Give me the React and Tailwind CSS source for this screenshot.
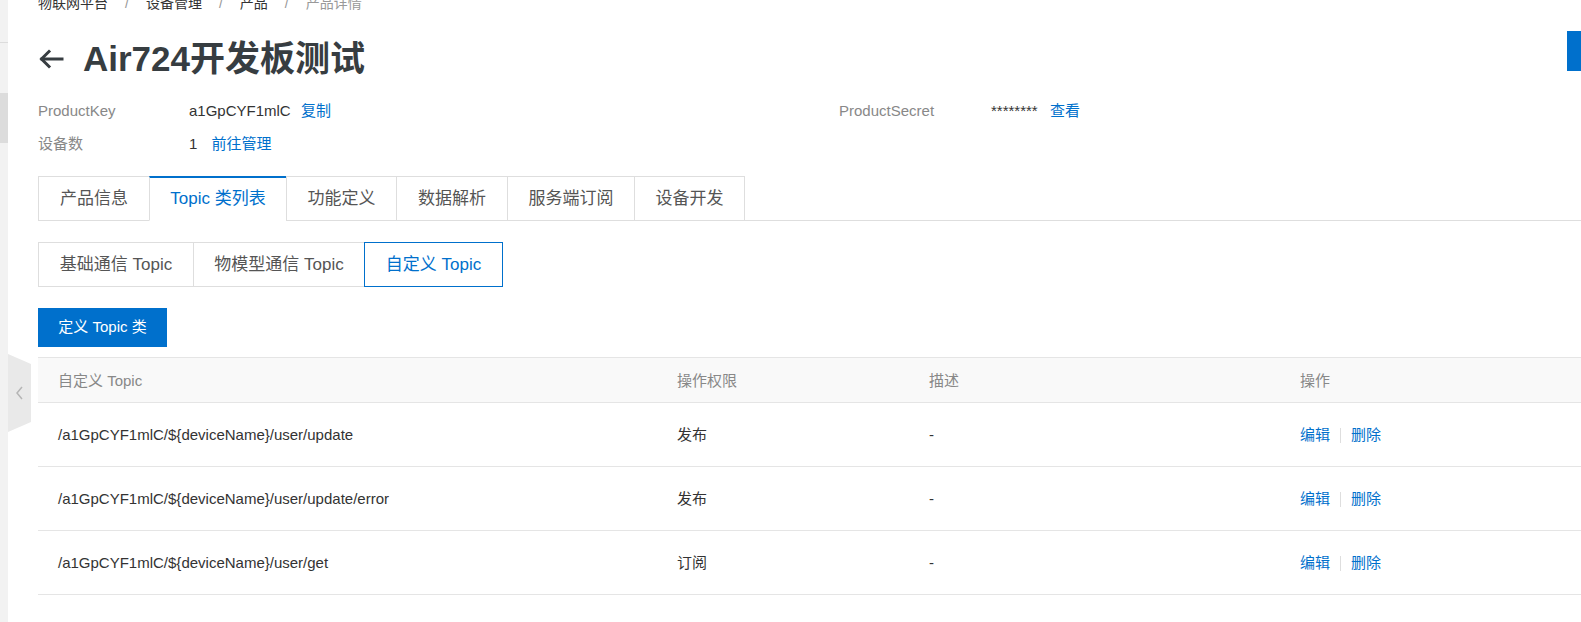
import React from 'react';

const font = { fontFamily: '"Liberation Sans", "Noto Sans CJK SC", sans-serif' };

const tabs = ['产品信息', 'Topic 类列表', '功能定义', '数据解析', '服务端订阅', '设备开发'];
const tabWidths = ['w-[111px]', 'w-[137px]', 'w-[110px]', 'w-[111px]', 'w-[127px]', 'w-[111px]'];

const subTabs = ['基础通信 Topic', '物模型通信 Topic', '自定义 Topic'];
const subWidths = ['w-[155px]', 'w-[171px]', 'w-[139px]'];

const rows = [
  { topic: '/a1GpCYF1mlC/${deviceName}/user/update', perm: '发布' },
  { topic: '/a1GpCYF1mlC/${deviceName}/user/update/error', perm: '发布' },
  { topic: '/a1GpCYF1mlC/${deviceName}/user/get', perm: '订阅' },
];

function BackArrow() {
  return (
    <svg width="26" height="20" viewBox="0 0 26 20" fill="none" stroke="#373d41" strokeWidth="3" strokeLinecap="square">
      <path d="M24 10H4" />
      <path d="M11 2.5L3.5 10L11 17.5" />
    </svg>
  );
}

export default function App() {
  return (
    <div className="relative flex w-[1581px] h-[622px] overflow-hidden bg-white text-[15px] text-[#333]" style={font}>
      {/* sidebar edge */}
      <aside className="flex w-2 shrink-0 flex-col bg-[#f2f2f2]">
        <div className="h-[43px] border-b border-[#dcdcdc]" />
        <div className="h-[50px]" />
        <div className="h-[50px] bg-[#dcdcdc]" />
      </aside>

      <main className="flex-1 pl-[30px]">
        {/* breadcrumb */}
        <div className="-mt-[6px] flex h-[18px] items-center gap-[17px] text-[14px] leading-[18px] text-[#333]">
          <span>物联网平台</span>
          <span className="text-[#999]">/</span>
          <span>设备管理</span>
          <span className="text-[#999]">/</span>
          <span>产品</span>
          <span className="text-[#999]">/</span>
          <span className="text-[#999]">产品详情</span>
        </div>

        {/* title */}
        <div className="mt-[27px] flex h-[40px] items-center">
          <BackArrow />
          <h1 className="ml-[19px] text-[35px] font-bold leading-[40px] text-[#373d41]">Air724开发板测试</h1>
        </div>

        {/* info */}
        <div className="mt-[22px] grid grid-cols-[151px_650px_152px_1fr] gap-y-[13px] leading-[20px]">
          <span className="text-[#888]">ProductKey</span>
          <span>
            a1GpCYF1mlC <a className="ml-[6px] text-[#0070cc]">复制</a>
          </span>
          <span className="text-[#888]">ProductSecret</span>
          <span>
            ******** <a className="ml-[8px] text-[#0070cc]">查看</a>
          </span>
          <span className="text-[#888]">设备数</span>
          <span>
            1 <a className="ml-[10px] text-[#0070cc]">前往管理</a>
          </span>
        </div>

        {/* main tabs */}
        <div className="mt-[22px] flex h-[45px] border-b border-[#dedede]">
          {tabs.map((t, i) => (
            <div
              key={t}
              className={
                tabWidths[i] +
                ' -mb-px flex items-center justify-center border-l text-[17px] ' +
                (i === tabs.length - 1 ? 'border-r ' : '') +
                (i === 1
                  ? 'border-t-2 border-t-[#0070cc] border-l-[#dedede] border-b border-b-white bg-white text-[#0070cc]'
                  : 'border-t border-[#dedede] border-b border-b-[#dedede] text-[#555]')
              }
            >
              {t}
            </div>
          ))}
        </div>

        {/* sub tabs */}
        <div className="mt-[21px] flex h-[45px]">
          {subTabs.map((t, i) => (
            <div
              key={t}
              className={
                subWidths[i] +
                ' flex items-center justify-center text-[17px] ' +
                (i === 2
                  ? 'border border-[#0070cc] text-[#0070cc]'
                  : 'border-y border-l border-[#dedede] text-[#555]')
              }
            >
              {t}
            </div>
          ))}
        </div>

        <button className="mt-[21px] h-[39px] w-[129px] bg-[#0070cc] text-[15px] text-white">定义 Topic 类</button>

        {/* table */}
        <div className="mt-[10px]">
          <div className="grid h-[46px] grid-cols-[619px_252px_371px_1fr] items-center border-y border-[#e5e5e5] bg-[#f9f9f9] pt-[2px] text-[#888]">
            <span className="pl-[20px]">自定义 Topic</span>
            <span className="pl-[20px]">操作权限</span>
            <span className="pl-[20px]">描述</span>
            <span className="pl-[20px]">操作</span>
          </div>
          {rows.map((r) => (
            <div key={r.topic} className="grid h-[64px] grid-cols-[619px_252px_371px_1fr] items-center border-b border-[#e5e5e5] pt-[2px]">
              <span className="pl-[20px]">{r.topic}</span>
              <span className="pl-[20px]">{r.perm}</span>
              <span className="pl-[20px]">-</span>
              <span className="flex items-center pl-[20px] text-[#0070cc]">
                编辑
                <span className="mx-[10px] h-[15px] w-px bg-[#dedede]" />
                删除
              </span>
            </div>
          ))}
        </div>
      </main>

      {/* collapse handle */}
      <div className="absolute left-[8px] top-[354px] flex h-[78px] w-[23px] items-center justify-center bg-[#e9e9e9] [clip-path:polygon(0_0,100%_10px,100%_68px,0_100%)]">
        <svg width="10" height="16" viewBox="0 0 10 16" fill="none" stroke="#b5b5b5" strokeWidth="1.5">
          <path d="M7 2L2 8L7 14" />
        </svg>
      </div>

      {/* right edge blue tab */}
      <div className="absolute right-0 top-[31px] h-[40px] w-[14px] bg-[#0070cc]" />
    </div>
  );
}
